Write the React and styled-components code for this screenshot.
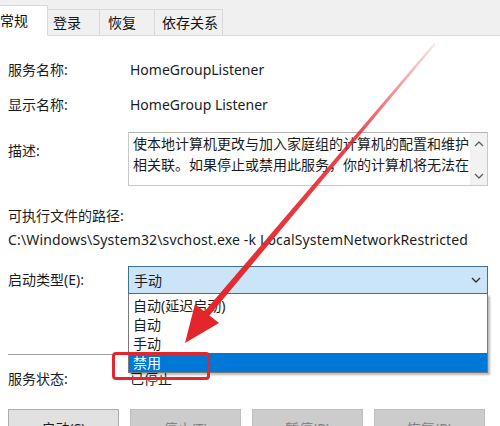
import React from 'react';
import styled, { createGlobalStyle } from 'styled-components';

const GlobalStyle = createGlobalStyle`
  html, body {
    margin: 0;
    padding: 0;
    background: #ffffff;
  }
  body {
    font-family: "Noto Sans", "Noto Sans CJK SC", sans-serif;
    color: #1b1b1b;
  }
`;

const Window = styled.div`
  position: relative;
  width: 500px;
  height: 426px;
  overflow: hidden;
  background: #ffffff;
  font-size: 14px;
`;

const TabStrip = styled.div`
  display: flex;
  align-items: flex-end;
  height: 35px;
  background: #f0f0f0;
  border-bottom: 1px solid #d9d9d9;
`;

const Tab = styled.div`
  box-sizing: border-box;
  width: ${(p) => p.$width}px;
  height: ${(p) => (p.$active ? 31 : 26)}px;
  margin-left: ${(p) => p.$offset || 0}px;
  margin-bottom: ${(p) => (p.$active ? -1 : 0)}px;
  padding-left: ${(p) => p.$pad}px;
  background: ${(p) => (p.$active ? '#ffffff' : '#f0f0f0')};
  border: 1px solid #d9d9d9;
  border-bottom: ${(p) => (p.$active ? '1px solid #ffffff' : 'none')};
  border-left: ${(p) => (p.$first ? '1px solid #d9d9d9' : 'none')};
  line-height: ${(p) => (p.$active ? 30 : 25)}px;
  font-size: 14px;
  color: #111;
`;

const Body = styled.div`
  padding: 0 12px 0 8px;
`;

const Row = styled.div`
  display: grid;
  grid-template-columns: 120px 360px;
  align-items: ${(p) => p.$align || 'center'};
  margin-top: ${(p) => p.$top}px;
  min-height: 20px;
`;

const Label = styled.div`
  line-height: 20px;
  margin-top: ${(p) => p.$top || 0}px;
`;

const Value = styled.div`
  line-height: 20px;
  padding-left: 2px;
`;

const Block = styled.div`
  margin-top: ${(p) => p.$top}px;
  line-height: 20px;
`;

const PathText = styled.div`
  margin-top: ${(p) => p.$top}px;
  line-height: 20px;
  white-space: nowrap;
  font-size: 14px;
  letter-spacing: 0.15px;
`;

const DescBox = styled.div`
  box-sizing: border-box;
  display: flex;
  height: 54px;
  border: 1px solid #c8c8c8;
  border-top-color: #b4b4b4;
  background: #fff;
`;

const DescText = styled.div`
  flex: 1;
  padding: 0 0 0 4px;
  line-height: 21px;
  height: 42px;
  overflow: hidden;
`;

const ScrollBar = styled.div`
  width: 17px;
  background: #f2f2f2;
  display: flex;
  flex-direction: column;
  justify-content: space-between;
  align-items: center;
  padding: 8px 0 6px;
`;

const ComboWrap = styled.div`
  position: relative;
`;

const Combo = styled.div`
  box-sizing: border-box;
  height: 28px;
  display: flex;
  align-items: center;
  justify-content: space-between;
  padding: 0 6px 0 5px;
  background: #cce4f7;
  border: 1px solid #3f7197;
`;

const DropList = styled.div`
  position: absolute;
  left: 0;
  top: 28px;
  width: 360px;
  box-sizing: border-box;
  padding-top: 2px;
  background: #ffffff;
  border: 1px solid #7a7a7a;
  border-top: none;
  box-shadow: 2px 2px 2px rgba(0, 0, 0, 0.28);
  z-index: 2;
`;

const Option = styled.div`
  height: 19px;
  line-height: 19px;
  padding-left: 4px;
  background: ${(p) => (p.$selected ? '#0078d7' : 'transparent')};
  color: ${(p) => (p.$selected ? '#ffffff' : '#1b1b1b')};
`;

const Separator = styled.div`
  margin-top: ${(p) => p.$top}px;
  height: 1px;
  background: #a0a0a0;
`;

const ButtonRow = styled.div`
  display: flex;
  gap: 11px;
  margin-top: ${(p) => p.$top}px;
`;

const Button = styled.div`
  box-sizing: border-box;
  width: 111px;
  height: 36px;
  padding-top: 9px;
  text-align: center;
  line-height: 20px;
  background: ${(p) => (p.$disabled ? '#cccccc' : '#e1e1e1')};
  border: 1px solid ${(p) => (p.$disabled ? '#bfbfbf' : '#adadad')};
  color: ${(p) => (p.$disabled ? '#838383' : '#1b1b1b')};
`;

const Overlay = styled.svg`
  position: absolute;
  left: 0;
  top: 0;
  pointer-events: none;
  z-index: 5;
`;

const Highlight = styled.div`
  position: absolute;
  left: 112px;
  top: 352px;
  width: 98px;
  height: 28px;
  box-sizing: border-box;
  border: 3px solid #e3262c;
  border-radius: 4px;
  z-index: 4;
`;

function Chevron({ up, color = '#5f5f5f' }) {
  return (
    <svg width="10" height="6" viewBox="0 0 10 6">
      <polyline
        points={up ? '1,5 5,1 9,5' : '1,1 5,5 9,1'}
        fill="none"
        stroke={color}
        strokeWidth="1.4"
      />
    </svg>
  );
}

const options = ['自动(延迟启动)', '自动', '手动', '禁用'];

export default function App() {
  return (
    <Window>
      <GlobalStyle />
      <TabStrip>
        <Tab $active $first $width={58} $offset={-10} $pad={9}>常规</Tab>
        <Tab $width={52} $pad={5}>登录</Tab>
        <Tab $width={55} $pad={8}>恢复</Tab>
        <Tab $width={68} $pad={7}>依存关系</Tab>
      </TabStrip>

      <Body>
        <Row $top={24}>
          <Label>服务名称:</Label>
          <Value>HomeGroupListener</Value>
        </Row>
        <Row $top={15}>
          <Label>显示名称:</Label>
          <Value>HomeGroup Listener</Value>
        </Row>
        <Row $top={17} $align="start">
          <Label $top={9}>描述:</Label>
          <DescBox>
            <DescText>
              使本地计算机更改与加入家庭组的计算机的配置和维护相关联。如果停止或禁用此服务，你的计算机将无法在家庭组中发现其他计算机。
            </DescText>
            <ScrollBar>
              <Chevron up />
              <Chevron />
            </ScrollBar>
          </DescBox>
        </Row>

        <Block $top={20}>可执行文件的路径:</Block>
        <PathText $top={4}>
          C:\Windows\System32\svchost.exe -k LocalSystemNetworkRestricted
        </PathText>

        <Row $top={16}>
          <Label>启动类型(E):</Label>
          <ComboWrap>
            <Combo>
              <span>手动</span>
              <Chevron color="#333" />
            </Combo>
            <DropList>
              {options.map((o) => (
                <Option key={o} $selected={o === '禁用'}>
                  {o}
                </Option>
              ))}
            </DropList>
          </ComboWrap>
        </Row>

        <Separator $top={60} />

        <Row $top={14}>
          <Label>服务状态:</Label>
          <Value>已停止</Value>
        </Row>

        <ButtonRow $top={20}>
          <Button>启动(S)</Button>
          <Button $disabled>停止(T)</Button>
          <Button $disabled>暂停(P)</Button>
          <Button $disabled>恢复(R)</Button>
        </ButtonRow>
      </Body>

      <Highlight />

      <Overlay width="500" height="426" viewBox="0 0 500 426">
        <defs>
          <linearGradient id="fade" x1="435" y1="43" x2="210" y2="315" gradientUnits="userSpaceOnUse">
            <stop offset="0" stopColor="#e3262c" stopOpacity="0.12" />
            <stop offset="0.35" stopColor="#e3262c" stopOpacity="0.85" />
            <stop offset="1" stopColor="#e3262c" stopOpacity="1" />
          </linearGradient>
        </defs>
        <polygon points="434,43 435.5,44.5 209,316 204,312" fill="url(#fade)" />
        <polygon points="185,343 195,304 219,323" fill="#e3262c" />
      </Overlay>
    </Window>
  );
}
